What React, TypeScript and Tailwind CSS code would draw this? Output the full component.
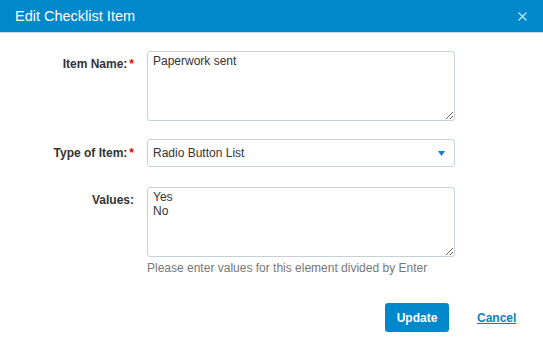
import React from 'react';

const Label: React.FC<{ text: string; required?: boolean; pt: string }> = ({ text, required, pt }) => (
  <div className={`w-[134px] shrink-0 flex justify-end ${pt} text-[12px] leading-[14px] font-bold text-[#333]`}>
    <span>{text}</span>
    {required && <span className="ml-[2px] text-[#e00]">*</span>}
  </div>
);

const App: React.FC = () => {
  return (
    <div className="w-[543px] h-[341px] bg-white font-['Liberation_Sans',Arial,sans-serif] overflow-hidden">
      {/* Header */}
      <div className="h-[33px] bg-[#0088cc] border-b border-[#cfd6dc] flex items-center justify-between pl-[15px] pr-[16px]">
        <span className="text-white text-[14.5px] leading-none">Edit Checklist Item</span>
        <svg width="9" height="9" viewBox="0 0 9 9" className="stroke-[#cde6f4]">
          <path d="M0.5 0.5L8.5 8.5M8.5 0.5L0.5 8.5" strokeWidth="1.2" />
        </svg>
      </div>

      {/* Form */}
      <div className="flex flex-col pt-[18px]">
        <div className="flex gap-[13px]">
          <Label text="Item Name:" required pt="pt-[6px]" />
          <textarea
            defaultValue="Paperwork sent"
            className="w-[308px] h-[70px] border border-[#c6d0d8] rounded-[3px] px-[5px] py-[2px] text-[12px] leading-[14px] text-[#333] outline-none"
          />
        </div>

        <div className="flex gap-[13px] mt-[18px]">
          <Label text="Type of Item:" required pt="pt-[7px]" />
          <div className="w-[308px] h-[28px] border border-[#c6d0d8] rounded-[3px] flex items-center justify-between pl-[5px] pr-[9px] text-[12px] text-[#333]">
            <span>Radio Button List</span>
            <svg width="7" height="5" viewBox="0 0 7 5">
              <path d="M0 0H7L3.5 5Z" fill="#0a7fc4" />
            </svg>
          </div>
        </div>

        <div className="flex gap-[13px] mt-[20px]">
          <Label text="Values:" pt="pt-[6px]" />
          <div className="w-[308px]">
            <textarea
              defaultValue={'Yes\nNo'}
              className="block w-full h-[70px] border border-[#c6d0d8] rounded-[3px] px-[5px] py-[2px] text-[12px] leading-[14px] text-[#333] outline-none"
            />
            <div className="mt-[4px] text-[12px] text-[#777] leading-[14px]">
              Please enter values for this element divided by Enter
            </div>
          </div>
        </div>
      </div>

      {/* Actions */}
      <div className="flex items-center mt-[28px] pl-[385px]">
        <button className="w-[64px] h-[29px] bg-[#0088cc] rounded-[3px] text-white text-[12px] font-bold">
          Update
        </button>
        <a href="#" className="ml-[28px] text-[12px] font-bold text-[#0a7fc4] underline">
          Cancel
        </a>
      </div>
    </div>
  );
};

export default App;
